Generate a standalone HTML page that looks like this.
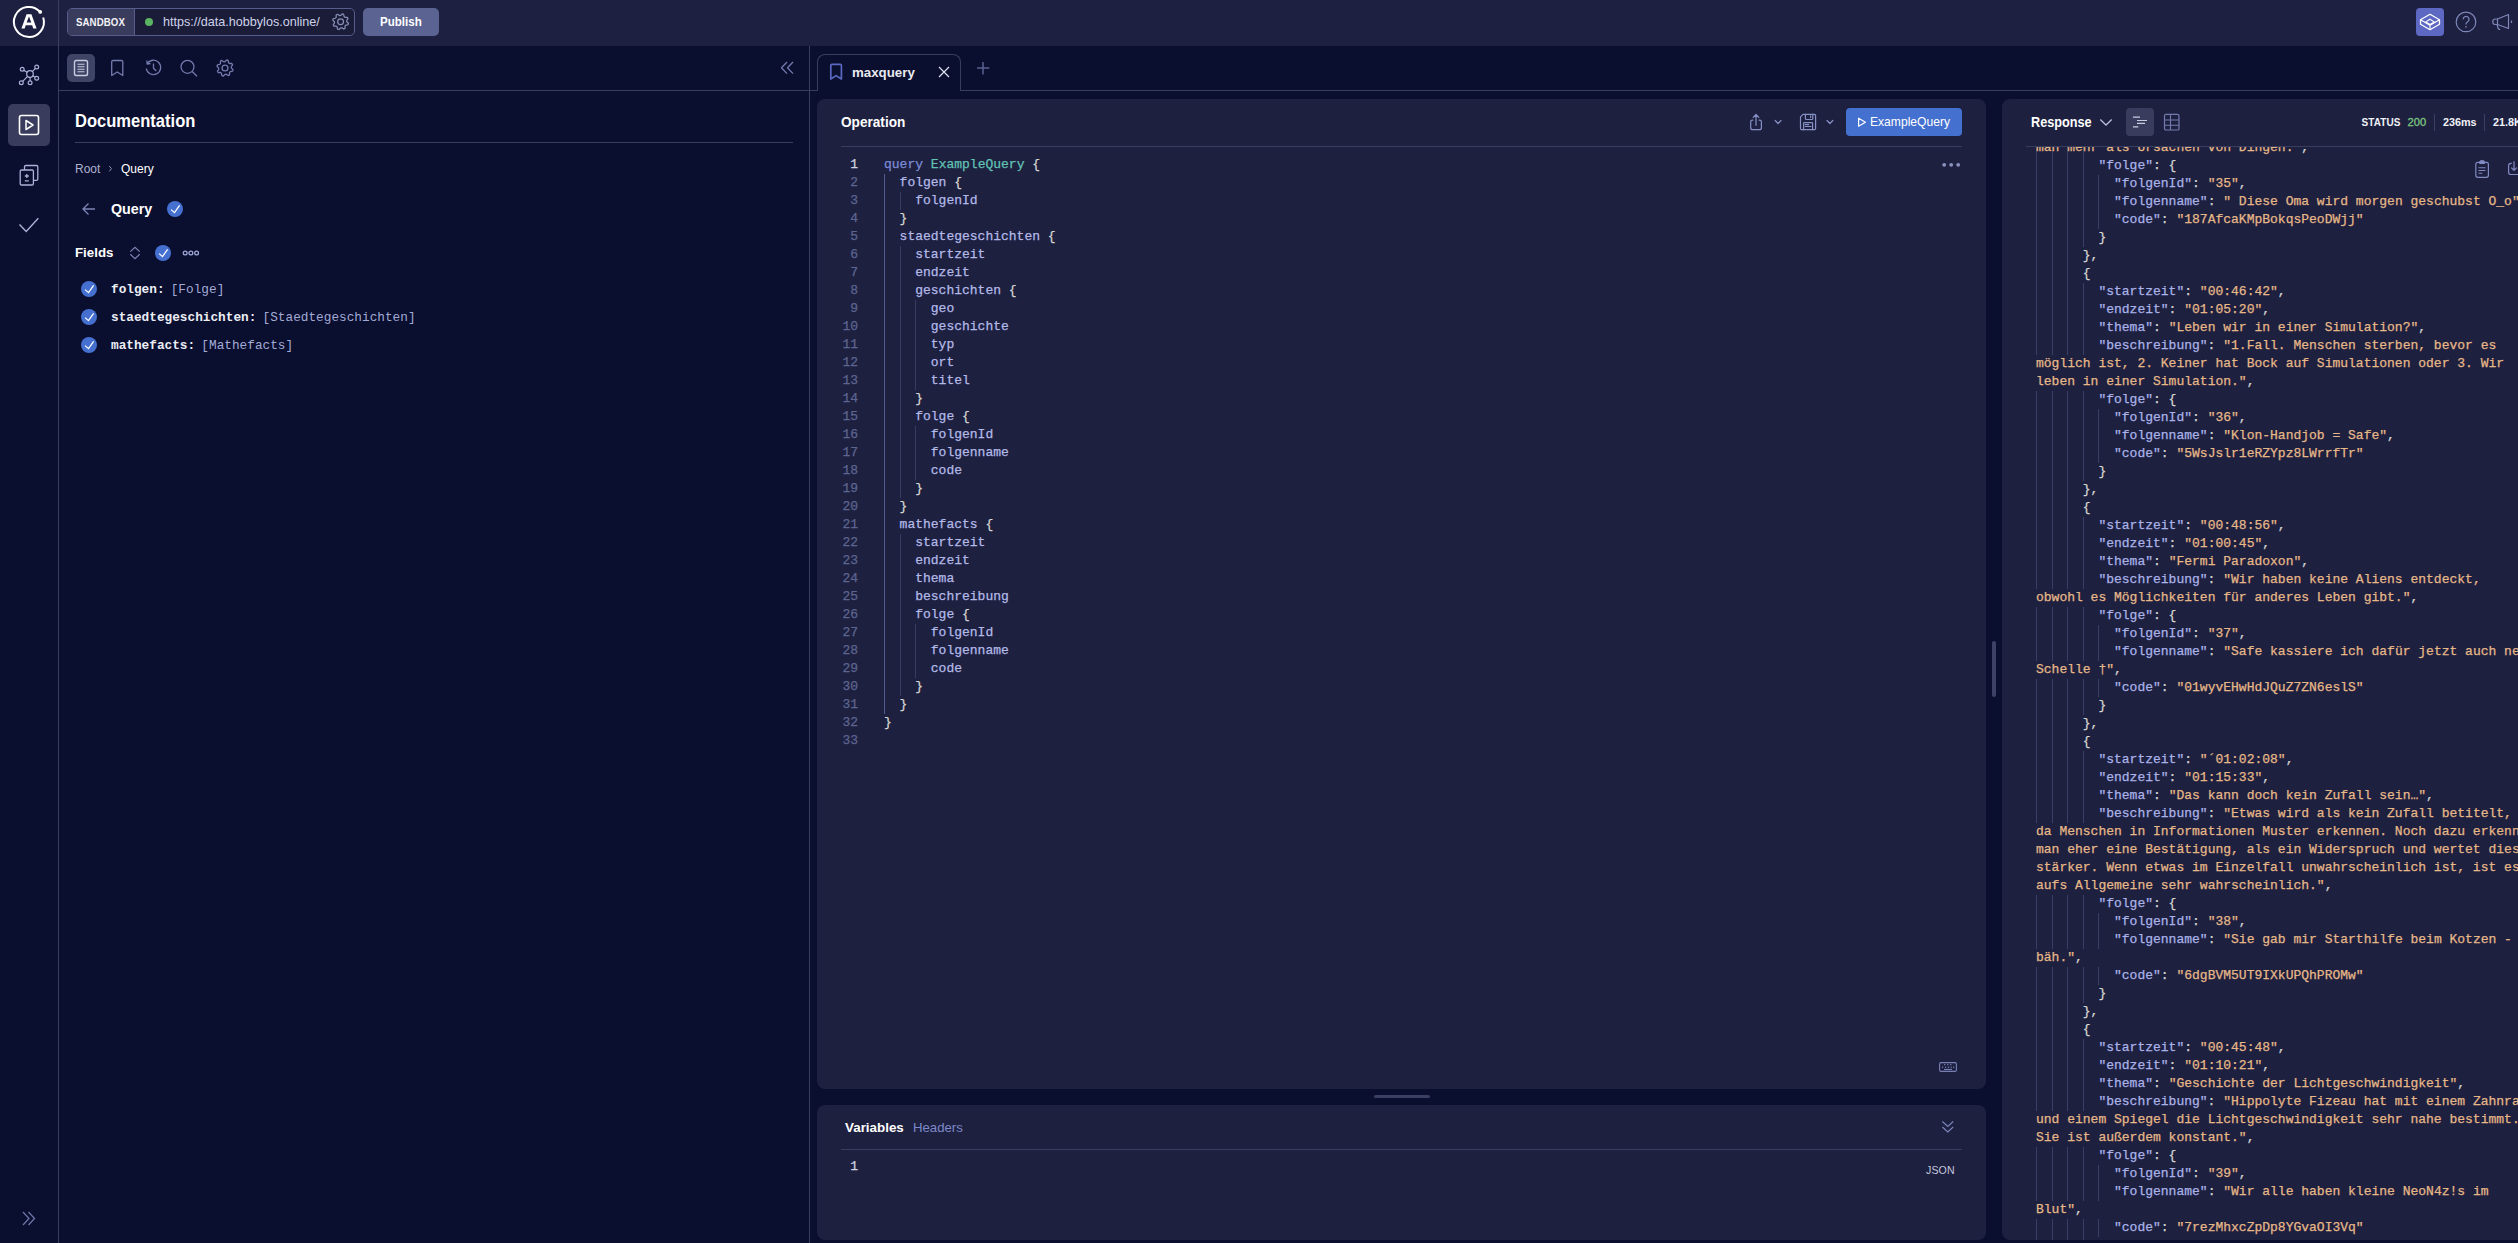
<!DOCTYPE html>
<html><head><meta charset="utf-8">
<style>
*{box-sizing:border-box;margin:0;padding:0}
html,body{width:2518px;height:1243px;overflow:hidden;background:#0a0e2f;font-family:"Liberation Sans",sans-serif;color:#fff}
.a{position:absolute}
.mono{font-family:"Liberation Mono",monospace}
svg{position:absolute;overflow:visible}
.panel{background:#1e2040;border-radius:8px}
.bl{background:#393d5e}
.t{position:absolute;white-space:pre;line-height:1}
.code{position:absolute;font-family:"Liberation Mono",monospace;font-size:13px;line-height:18px;white-space:pre;-webkit-text-stroke:0.25px currentColor}
.ln{position:absolute;width:40px;text-align:right;color:#5d6590}
.g{position:absolute;width:1px;background:#3a3f66}
.kw{color:#7d8bd8}
.nm{color:#62c3b4}
.fd{color:#b3bae8}
.k{color:#aab3e8}
.s{color:#e6b888}
.p{color:#d6d6d2}
</style></head><body>
<div class="a" style="left:0;top:0;width:2518px;height:46px;background:#1d2040"></div>
<div class="a bl" style="left:58px;top:0;width:1px;height:1243px"></div>
<div class="a bl" style="left:809px;top:46px;width:1px;height:1197px"></div>
<div class="a bl" style="left:59px;top:90px;width:759px;height:1px"></div>
<div class="a bl" style="left:960px;top:90px;width:1558px;height:1px"></div>
<svg width="58" height="46" style="left:0;top:0">
<path d="M 43.23 17.46 A 15 15 0 1 1 40.11 11.94" fill="none" stroke="#fff" stroke-width="2"/>
<circle cx="40.2" cy="11.9" r="1.9" fill="#fff"/>
<path d="M 26.6 14.2 L 31.4 14.2 L 36.6 28.4 L 33.2 28.4 L 32.2 25.3 L 25.7 25.3 L 24.7 28.4 L 21.4 28.4 Z M 26.6 22.6 L 31.3 22.6 L 29.0 16.4 Z" fill="#fff" fill-rule="evenodd"/>
</svg>
<div class="a" style="left:67px;top:8px;width:288px;height:28px;border:1px solid #565d8c;border-radius:5px;background:#1a1c38;overflow:hidden"><div class="a" style="left:0;top:0;width:67px;height:26px;background:#393c5c;border-right:1px solid #565d8c"></div></div>
<div class="t" style="left:76px;top:16.55px;font-size:11.4px;color:#f2f2f7;font-weight:bold;letter-spacing:0.1px;transform:scaleX(0.85);transform-origin:0 0">SANDBOX</div>

<div class="a" style="left:145px;top:18px;width:8px;height:8px;border-radius:50%;background:#5bb462"></div>
<div class="t" style="left:163px;top:15.63px;font-size:12.6px;color:#cfd3ea;">https://data.hobbylos.online/</div>

<svg width="2518" height="46" style="left:0;top:0"><path d="M 340.60 15.46 L 342.16 13.85 L 343.66 14.31 L 344.07 16.51 L 345.01 17.29 L 347.25 17.26 L 347.99 18.64 L 346.72 20.48 L 346.84 21.70 L 348.45 23.26 L 347.99 24.76 L 345.79 25.17 L 345.01 26.11 L 345.04 28.35 L 343.66 29.09 L 341.82 27.82 L 340.60 27.94 L 339.04 29.55 L 337.54 29.09 L 337.13 26.89 L 336.19 26.11 L 333.95 26.14 L 333.21 24.76 L 334.48 22.92 L 334.36 21.70 L 332.75 20.14 L 333.21 18.64 L 335.41 18.23 L 336.19 17.29 L 336.16 15.05 L 337.54 14.31 L 339.38 15.58 Z" fill="none" stroke="#8a90b8" stroke-width="1.2" stroke-linejoin="round"/><circle cx="340.6" cy="21.7" r="2.88" fill="none" stroke="#8a90b8" stroke-width="1.2"/></svg>
<div class="a" style="left:363px;top:8px;width:76px;height:28px;border-radius:5px;background:#5a6391"></div>
<div class="t" style="left:380px;top:15.29px;font-size:13.6px;color:#fff;font-weight:bold;transform:scaleX(0.85);transform-origin:0 0">Publish</div>

<div class="a" style="left:2416px;top:8px;width:28px;height:28px;border-radius:4px;background:#5c68c2"></div>
<svg width="2518" height="46" style="left:0;top:0">
<path d="M 2430 14.3 L 2439.5 19.8 L 2439.5 24.2 L 2430 29.7 L 2420.5 24.2 L 2420.5 19.8 Z" fill="none" stroke="#fff" stroke-width="1.3" stroke-linejoin="round"/>
<path d="M 2420.5 19.8 L 2430 25.3 L 2439.5 19.8 M 2430 25.3 L 2430 29.7" fill="none" stroke="#fff" stroke-width="1.1"/>
<path d="M 2430 19.2 L 2434.2 21.9 L 2430 24.5 L 2425.8 21.9 Z" fill="none" stroke="#fff" stroke-width="1.1"/>
<circle cx="2466" cy="21.9" r="9.8" fill="none" stroke="#7d86b8" stroke-width="1.2"/>
<path d="M 2463.2 19.3 A 2.9 2.9 0 1 1 2467.6 21.8 C 2466.3 22.6 2466 23.3 2466 24.6" fill="none" stroke="#7d86b8" stroke-width="1.3"/>
<circle cx="2466" cy="26.9" r="0.8" fill="#7d86b8"/>
<path d="M 2497.5 19 L 2508.5 14.5 L 2508.5 28.5 L 2497.5 24.5 Z" fill="none" stroke="#7d86b8" stroke-width="1.2" stroke-linejoin="round"/>
<path d="M 2497.5 19 L 2495 19 A 2.8 2.8 0 0 0 2495 24.5 L 2497.5 24.5 M 2497 24.5 L 2498.2 28.5 C 2498.5 29.5 2499.5 29.5 2500 29" fill="none" stroke="#7d86b8" stroke-width="1.2"/>
<path d="M 2511.5 20.5 L 2511.5 23" stroke="#7d86b8" stroke-width="1.2"/>
</svg>
<div class="a" style="left:8px;top:104px;width:42px;height:42px;border-radius:5px;background:#393c5c"></div>
<svg width="58" height="1243" style="left:0;top:0">
<g fill="none" stroke="#aab2d8" stroke-width="1.2">
<circle cx="30" cy="74" r="3.3"/>
<circle cx="22.2" cy="69.3" r="1.9"/><circle cx="36.7" cy="67" r="1.9"/><circle cx="36.7" cy="78.2" r="1.9"/>
<circle cx="21.3" cy="82.8" r="1.9"/><circle cx="30.1" cy="82.8" r="1.9"/>
<path d="M 27.43 72.45 L 23.83 70.28 M 32.07 71.83 L 35.39 68.37 M 32.54 75.59 L 35.09 77.19 M 27.89 76.13 L 22.64 81.45 M 30.03 77.00 L 30.08 80.90"/>
</g>
<rect x="19.5" y="115.5" width="19" height="19" rx="2" fill="none" stroke="#fff" stroke-width="1.6"/>
<path d="M 26 120.5 L 33 125 L 26 129.5 Z" fill="none" stroke="#fff" stroke-width="1.5" stroke-linejoin="round"/>
<g fill="none" stroke="#aab2d8" stroke-width="1.3">
<path d="M 24.5 170 L 24.5 166.8 Q 24.5 165.5 25.8 165.5 L 36.5 165.5 Q 37.8 165.5 37.8 166.8 L 37.8 179 Q 37.8 180.3 36.5 180.3 L 33.3 180.3"/>
<rect x="20.2" y="170" width="13.2" height="15" rx="1.3"/>
<path d="M 26.8 174 L 26.8 178 M 24.8 176 L 28.8 176 M 24.8 180.8 L 28.8 180.8"/>
</g>
<path d="M 19.5 224.5 L 26.2 231.5 L 38.3 218.3" fill="none" stroke="#aab2d8" stroke-width="1.4"/>
<path d="M 23 1212 L 29 1218.5 L 23 1225 M 28.5 1212 L 34.5 1218.5 L 28.5 1225" fill="none" stroke="#6b74a6" stroke-width="1.3"/>
</svg>
<div class="a" style="left:67px;top:54px;width:28px;height:28px;border-radius:5px;background:#3e4466"></div>
<svg width="810" height="400" style="left:0;top:0">
<rect x="74.5" y="60.5" width="13" height="15" rx="1.8" fill="none" stroke="#c9ccdf" stroke-width="1.4"/>
<path d="M 77.5 64.2 L 84.5 64.2 M 77.5 66.7 L 84.5 66.7 M 77.5 69.2 L 84.5 69.2 M 77.5 71.7 L 84.5 71.7" stroke="#c9ccdf" stroke-width="1.1"/>
<g fill="none" stroke="#737bad" stroke-width="1.3" stroke-linejoin="round">
<path d="M 111.7 75.5 L 111.7 61.8 Q 111.7 60.5 113 60.5 L 121.5 60.5 Q 122.8 60.5 122.8 61.8 L 122.8 75.5 L 117.25 72 Z"/>
<path d="M 147.2 63.8 A 7.2 7.2 0 1 1 146.3 68.5"/>
<path d="M 146.8 60.5 L 147.2 64 L 150.5 63.5"/>
<path d="M 153.5 63.5 L 153.5 68.2 L 156.3 71"/>
<circle cx="187.5" cy="66.8" r="6.5"/>
<path d="M 192.2 71.5 L 197 76.3"/>
<path d="M 225.00 61.60 L 226.60 59.96 L 228.14 60.42 L 228.55 62.68 L 229.52 63.48 L 231.82 63.44 L 232.58 64.86 L 231.27 66.75 L 231.40 68.00 L 233.04 69.60 L 232.58 71.14 L 230.32 71.55 L 229.52 72.52 L 229.56 74.82 L 228.14 75.58 L 226.25 74.27 L 225.00 74.40 L 223.40 76.04 L 221.86 75.58 L 221.45 73.32 L 220.48 72.52 L 218.18 72.56 L 217.42 71.14 L 218.73 69.25 L 218.60 68.00 L 216.96 66.40 L 217.42 64.86 L 219.68 64.45 L 220.48 63.48 L 220.44 61.18 L 221.86 60.42 L 223.75 61.73 Z" fill="none" stroke="#737bad" stroke-width="1.3" stroke-linejoin="round"/><circle cx="225" cy="68" r="2.95" fill="none" stroke="#737bad" stroke-width="1.3"/>
<path d="M 787 62 L 781.5 67.8 L 787 73.6 M 793 62 L 787.5 67.8 L 793 73.6"/>
</g>
<path d="M 95 209 L 83 209 M 88.5 203.5 L 83 209 L 88.5 214.5" fill="none" stroke="#7c84b4" stroke-width="1.3"/>
<circle cx="175" cy="209" r="8" fill="#4570d0"/><path d="M 171.1 209.6 L 174.5 212.6 L 179.6 205.4" fill="none" stroke="#fff" stroke-width="1.25"/>
<path d="M 130.3 251.6 L 135 247.3 L 139.7 251.6 M 130.3 254.3 L 135 258.7 L 139.7 254.3" fill="none" stroke="#7c84b4" stroke-width="1.2"/>
<circle cx="163" cy="253" r="8" fill="#4570d0"/><path d="M 159.1 253.6 L 162.5 256.6 L 167.6 249.4" fill="none" stroke="#fff" stroke-width="1.25"/>
<g fill="none" stroke="#9ea7d6" stroke-width="1.3"><circle cx="185.2" cy="253" r="1.9"/><circle cx="190.9" cy="253" r="1.9"/><circle cx="196.6" cy="253" r="1.9"/></g>
<circle cx="89" cy="289" r="8" fill="#4570d0"/><path d="M 85.1 289.6 L 88.5 292.6 L 93.6 285.4" fill="none" stroke="#fff" stroke-width="1.25"/>
<circle cx="89" cy="317" r="8" fill="#4570d0"/><path d="M 85.1 317.6 L 88.5 320.6 L 93.6 313.4" fill="none" stroke="#fff" stroke-width="1.25"/>
<circle cx="89" cy="345" r="8" fill="#4570d0"/><path d="M 85.1 345.6 L 88.5 348.6 L 93.6 341.4" fill="none" stroke="#fff" stroke-width="1.25"/>
</svg>
<div class="t" style="left:75px;top:112.83px;font-size:17.8px;color:#fff;font-weight:bold;transform:scaleX(0.93);transform-origin:0 0">Documentation</div>

<div class="a bl" style="left:75px;top:142px;width:718px;height:1px"></div>
<div class="t" style="left:75px;top:163.04px;font-size:12px;color:#aeb3cf;">Root</div>

<svg width="200" height="200" style="left:0;top:0"><path d="M 109.3 166 L 111.5 168.7 L 109.3 171.4" fill="none" stroke="#8a90b8" stroke-width="1"/></svg>
<div class="t" style="left:121px;top:163.04px;font-size:12px;color:#fff;">Query</div>

<div class="t" style="left:111px;top:201.70px;font-size:14.3px;color:#fff;font-weight:bold;">Query</div>

<div class="t" style="left:75px;top:245.94px;font-size:13.3px;color:#fff;font-weight:bold;">Fields</div>

<div class="code" style="left:111px;top:281px;font-size:12.75px;line-height:18px;-webkit-text-stroke:0"><span style="color:#eceef6;font-weight:bold">folgen:</span><span style="letter-spacing:-1.5px"> </span><span style="color:#a2abd6">[Folge]</span></div>

<div class="code" style="left:111px;top:309px;font-size:12.75px;line-height:18px;-webkit-text-stroke:0"><span style="color:#eceef6;font-weight:bold">staedtegeschichten:</span><span style="letter-spacing:-1.5px"> </span><span style="color:#a2abd6">[Staedtegeschichten]</span></div>

<div class="code" style="left:111px;top:337px;font-size:12.75px;line-height:18px;-webkit-text-stroke:0"><span style="color:#eceef6;font-weight:bold">mathefacts:</span><span style="letter-spacing:-1.5px"> </span><span style="color:#a2abd6">[Mathefacts]</span></div>

<div class="a" style="left:817px;top:54px;width:144px;height:37px;border:1px solid #393d5e;border-bottom:none;border-radius:8px 8px 0 0;background:#0a0e2f"></div>
<div class="t" style="left:852px;top:66.24px;font-size:13.3px;color:#e9eaf0;font-weight:bold;">maxquery</div>

<svg width="2518" height="100" style="left:0;top:0">
<path d="M 830.8 79 L 830.8 65.3 Q 830.8 64.3 831.8 64.3 L 840.4 64.3 Q 841.4 64.3 841.4 65.3 L 841.4 79 L 836.1 75.6 Z" fill="none" stroke="#5a69bf" stroke-width="1.7" stroke-linejoin="round"/>
<path d="M 939 67 L 949 77 M 949 67 L 939 77" stroke="#dfe2f2" stroke-width="1.2"/>
<path d="M 983 62 L 983 74.5 M 977 68 L 989.3 68" stroke="#59618f" stroke-width="1.5"/>
</svg>
<div class="a panel" style="left:817px;top:99px;width:1169px;height:990px"></div>
<div class="a panel" style="left:817px;top:1105px;width:1169px;height:135px"></div>
<div class="a panel" style="left:2002px;top:99px;width:600px;height:1141px"></div>
<div class="a" style="left:1992px;top:641px;width:4px;height:56px;border-radius:2px;background:#3d4166"></div>
<div class="a" style="left:1374px;top:1095px;width:56px;height:3px;border-radius:2px;background:#3b3f63"></div>
<div class="t" style="left:841px;top:114.67px;font-size:14.8px;color:#fff;font-weight:bold;transform:scaleX(0.92);transform-origin:0 0">Operation</div>

<div class="a bl" style="left:841px;top:146px;width:1121px;height:1px"></div>
<div class="a" style="left:1846px;top:108px;width:116px;height:28px;border-radius:4px;background:#4470cf"></div>
<div class="t" style="left:1870px;top:116.26px;font-size:12.1px;color:#fff;">ExampleQuery</div>

<svg width="2518" height="1243" style="left:0;top:0">
<g fill="none" stroke="#8590c4" stroke-width="1.2" stroke-linejoin="round" stroke-linecap="round">
<path d="M 1752.8 120.2 L 1752.3 120.2 Q 1750.7 120.2 1750.7 121.8 L 1750.7 127.7 Q 1750.7 129.7 1752.7 129.7 L 1759.4 129.7 Q 1761.4 129.7 1761.4 127.7 L 1761.4 121.8 Q 1761.4 120.2 1759.8 120.2 L 1759.2 120.2"/>
<path d="M 1756 125.3 L 1756 114.5 M 1753.2 117.4 L 1756 114.5 L 1758.8 117.4"/>
<path d="M 1775.2 120.5 L 1778.1 123.5 L 1781 120.5"/>
<path d="M 1803 114.3 L 1814.5 114.3 Q 1815.6 114.3 1815.6 115.4 L 1815.6 128.6 Q 1815.6 129.7 1814.5 129.7 L 1801.5 129.7 Q 1800.5 129.7 1800.5 128.6 L 1800.5 116.8 Z"/>
<path d="M 1805.4 114.3 L 1805.4 118.6 Q 1805.4 119.5 1806.3 119.5 L 1811.9 119.5 Q 1812.8 119.5 1812.8 118.6 L 1812.8 114.3"/>
<path d="M 1810.6 115.8 L 1810.6 117.4"/>
<path d="M 1803.6 129.7 L 1803.6 123.4 Q 1803.6 122.6 1804.4 122.6 L 1811.8 122.6 Q 1812.6 122.6 1812.6 123.4 L 1812.6 129.7"/>
<path d="M 1805.3 124.6 L 1808.6 124.6 M 1805.3 126.5 L 1811 126.5"/>
<path d="M 1827 120.5 L 1829.9 123.5 L 1832.8 120.5"/>
</g>
<path d="M 1858.6 118.2 L 1865.4 122.2 L 1858.6 126.2 Z" fill="none" stroke="#fff" stroke-width="1.2" stroke-linejoin="round"/>
<circle cx="1944.2" cy="164.8" r="1.9" fill="#8a92bf"/><circle cx="1951.2" cy="164.8" r="1.9" fill="#8a92bf"/><circle cx="1958.2" cy="164.8" r="1.9" fill="#8a92bf"/>
<rect x="1939.6" y="1062.6" width="16.8" height="8.8" rx="1.4" fill="none" stroke="#7880b4" stroke-width="1.1"/>
<g fill="#7880b4"><rect x="1944.1" y="1064" width="1.2" height="1.2"/><rect x="1947.2" y="1064" width="1.2" height="1.2"/><rect x="1950.2" y="1064" width="1.2" height="1.2"/><rect x="1942" y="1066.6" width="1.2" height="1.2"/><rect x="1945" y="1066.6" width="1.2" height="1.2"/><rect x="1947.9" y="1066.6" width="1.2" height="1.2"/><rect x="1950.6" y="1066.6" width="1.2" height="1.2"/><rect x="1953" y="1066.6" width="1.2" height="1.2"/><rect x="1944" y="1068.9" width="8" height="1.1"/></g>
<path d="M 1942.4 1121.5 L 1947.8 1126.4 L 1953.2 1121.5 M 1942.4 1127 L 1947.8 1132 L 1953.2 1127" fill="none" stroke="#7d87bf" stroke-width="1.1"/>
</svg>
<div class="t" style="left:845px;top:1120.66px;font-size:13.4px;color:#fff;font-weight:bold;">Variables</div>

<div class="t" style="left:913px;top:1120.83px;font-size:13.2px;color:#7d89c8;">Headers</div>

<div class="a bl" style="left:841px;top:1149px;width:1121px;height:1px"></div>
<div class="code" style="left:846px;top:1158px;color:#d0d3e0;width:12px;text-align:right">1</div>
<div class="t" style="left:1926px;top:1165.23px;font-size:10.6px;color:#c3c7dc;letter-spacing:0.1px">JSON</div>

<div class="g" style="left:884.0px;top:173.5px;height:540px;background:#4f5a8e"></div>
<div class="g" style="left:899.6px;top:191.5px;height:18px;background:#363b60"></div>
<div class="g" style="left:899.6px;top:245.5px;height:252px;background:#363b60"></div>
<div class="g" style="left:899.6px;top:533.5px;height:162px;background:#363b60"></div>
<div class="g" style="left:915.2px;top:299.5px;height:90px;background:#363b60"></div>
<div class="g" style="left:915.2px;top:425.5px;height:54px;background:#363b60"></div>
<div class="g" style="left:915.2px;top:623.5px;height:54px;background:#363b60"></div>
<div class="code" style="left:0;top:155.5px;width:1980px;height:600px"><div class="ln" style="left:818px;top:0px;color:#d0d3e0">1</div><div class="ln" style="left:818px;top:18px;color:#5d6590">2</div><div class="ln" style="left:818px;top:36px;color:#5d6590">3</div><div class="ln" style="left:818px;top:54px;color:#5d6590">4</div><div class="ln" style="left:818px;top:72px;color:#5d6590">5</div><div class="ln" style="left:818px;top:90px;color:#5d6590">6</div><div class="ln" style="left:818px;top:108px;color:#5d6590">7</div><div class="ln" style="left:818px;top:126px;color:#5d6590">8</div><div class="ln" style="left:818px;top:144px;color:#5d6590">9</div><div class="ln" style="left:818px;top:162px;color:#5d6590">10</div><div class="ln" style="left:818px;top:180px;color:#5d6590">11</div><div class="ln" style="left:818px;top:198px;color:#5d6590">12</div><div class="ln" style="left:818px;top:216px;color:#5d6590">13</div><div class="ln" style="left:818px;top:234px;color:#5d6590">14</div><div class="ln" style="left:818px;top:252px;color:#5d6590">15</div><div class="ln" style="left:818px;top:270px;color:#5d6590">16</div><div class="ln" style="left:818px;top:288px;color:#5d6590">17</div><div class="ln" style="left:818px;top:306px;color:#5d6590">18</div><div class="ln" style="left:818px;top:324px;color:#5d6590">19</div><div class="ln" style="left:818px;top:342px;color:#5d6590">20</div><div class="ln" style="left:818px;top:360px;color:#5d6590">21</div><div class="ln" style="left:818px;top:378px;color:#5d6590">22</div><div class="ln" style="left:818px;top:396px;color:#5d6590">23</div><div class="ln" style="left:818px;top:414px;color:#5d6590">24</div><div class="ln" style="left:818px;top:432px;color:#5d6590">25</div><div class="ln" style="left:818px;top:450px;color:#5d6590">26</div><div class="ln" style="left:818px;top:468px;color:#5d6590">27</div><div class="ln" style="left:818px;top:486px;color:#5d6590">28</div><div class="ln" style="left:818px;top:504px;color:#5d6590">29</div><div class="ln" style="left:818px;top:522px;color:#5d6590">30</div><div class="ln" style="left:818px;top:540px;color:#5d6590">31</div><div class="ln" style="left:818px;top:558px;color:#5d6590">32</div><div class="ln" style="left:818px;top:576px;color:#5d6590">33</div></div>
<div class="code" style="left:884px;top:155.5px;width:1000px;height:600px"><div class="fd" style="position:absolute;left:0.0px;top:0px"><span class="kw">query</span> <span class="nm">ExampleQuery</span> <span class="p">{</span></div><div class="fd" style="position:absolute;left:15.6px;top:18px">folgen <span class="p">{</span></div><div class="fd" style="position:absolute;left:31.2px;top:36px">folgenId</div><div class="fd" style="position:absolute;left:15.6px;top:54px"><span class="p">}</span></div><div class="fd" style="position:absolute;left:15.6px;top:72px">staedtegeschichten <span class="p">{</span></div><div class="fd" style="position:absolute;left:31.2px;top:90px">startzeit</div><div class="fd" style="position:absolute;left:31.2px;top:108px">endzeit</div><div class="fd" style="position:absolute;left:31.2px;top:126px">geschichten <span class="p">{</span></div><div class="fd" style="position:absolute;left:46.8px;top:144px">geo</div><div class="fd" style="position:absolute;left:46.8px;top:162px">geschichte</div><div class="fd" style="position:absolute;left:46.8px;top:180px">typ</div><div class="fd" style="position:absolute;left:46.8px;top:198px">ort</div><div class="fd" style="position:absolute;left:46.8px;top:216px">titel</div><div class="fd" style="position:absolute;left:31.2px;top:234px"><span class="p">}</span></div><div class="fd" style="position:absolute;left:31.2px;top:252px">folge <span class="p">{</span></div><div class="fd" style="position:absolute;left:46.8px;top:270px">folgenId</div><div class="fd" style="position:absolute;left:46.8px;top:288px">folgenname</div><div class="fd" style="position:absolute;left:46.8px;top:306px">code</div><div class="fd" style="position:absolute;left:31.2px;top:324px"><span class="p">}</span></div><div class="fd" style="position:absolute;left:15.6px;top:342px"><span class="p">}</span></div><div class="fd" style="position:absolute;left:15.6px;top:360px">mathefacts <span class="p">{</span></div><div class="fd" style="position:absolute;left:31.2px;top:378px">startzeit</div><div class="fd" style="position:absolute;left:31.2px;top:396px">endzeit</div><div class="fd" style="position:absolute;left:31.2px;top:414px">thema</div><div class="fd" style="position:absolute;left:31.2px;top:432px">beschreibung</div><div class="fd" style="position:absolute;left:31.2px;top:450px">folge <span class="p">{</span></div><div class="fd" style="position:absolute;left:46.8px;top:468px">folgenId</div><div class="fd" style="position:absolute;left:46.8px;top:486px">folgenname</div><div class="fd" style="position:absolute;left:46.8px;top:504px">code</div><div class="fd" style="position:absolute;left:31.2px;top:522px"><span class="p">}</span></div><div class="fd" style="position:absolute;left:15.6px;top:540px"><span class="p">}</span></div><div class="fd" style="position:absolute;left:0.0px;top:558px"><span class="p">}</span></div><div class="fd" style="position:absolute;left:0.0px;top:576px"></div></div>
<div class="t" style="left:2030.5px;top:115.62px;font-size:13.8px;color:#fff;font-weight:bold;transform:scaleX(0.92);transform-origin:0 0">Response</div>

<div class="a" style="left:2126px;top:108px;width:28px;height:28px;border-radius:4px;background:#393c5c"></div>
<svg width="2518" height="1243" style="left:0;top:0">
<path d="M 2100.3 119.5 L 2106 125 L 2111.7 119.5" fill="none" stroke="#b9bed8" stroke-width="1.3"/>
<g stroke="#c9ccdf" stroke-width="1.2"><path d="M 2133 117.2 L 2140 117.2 M 2137 120.5 L 2147 120.5 M 2137 123.4 L 2145 123.4 M 2133 126.9 L 2138.3 126.9"/></g>
<rect x="2164.5" y="114.3" width="14.5" height="15.7" rx="1.6" fill="none" stroke="#737bad" stroke-width="1.2"/>
<path d="M 2164.5 120 L 2179 120 M 2164.5 125.2 L 2179 125.2 M 2170.5 114.3 L 2170.5 130" stroke="#737bad" stroke-width="1.1"/>
<rect x="2475.8" y="162.3" width="12.6" height="15" rx="2" fill="none" stroke="#8089c0" stroke-width="1.2"/>
<path d="M 2479.5 163.5 L 2479.5 162.5 Q 2479.5 160.5 2481.8 160.5 L 2482.5 160.5 Q 2484.6 160.5 2484.6 162.5 L 2484.6 163.5 Z" fill="#8089c0" stroke="#8089c0" stroke-width="1"/>
<path d="M 2478.5 167.7 L 2485.5 167.7 M 2478.5 170.5 L 2485.5 170.5 M 2478.5 173.3 L 2482.3 173.3" stroke="#8089c0" stroke-width="1.1"/>
<path d="M 2511.8 163.3 L 2510.8 163.3 Q 2508.6 163.3 2508.6 165.5 L 2508.6 172.3 Q 2508.6 174.5 2510.8 174.5 L 2520 174.5 M 2514 161.3 L 2514 170.3 M 2511.2 167.6 L 2514 170.3 L 2516.8 167.6" fill="none" stroke="#8089c0" stroke-width="1.2"/>
<path d="M 2434.5 114 L 2434.5 131 M 2484.5 114 L 2484.5 131" stroke="#3b3f63" stroke-width="1"/>
</svg>
<div class="t" style="left:2361.5px;top:117.94px;font-size:10px;color:#f0f1f6;font-weight:bold;letter-spacing:0.1px">STATUS</div>

<div class="t" style="left:2407.5px;top:116.92px;font-size:11.2px;color:#7cc57f;-webkit-text-stroke:0.3px #7cc57f">200</div>

<div class="t" style="left:2443px;top:117.26px;font-size:10.8px;color:#f0f1f6;font-weight:bold;">236ms</div>

<div class="t" style="left:2493px;top:117.26px;font-size:10.8px;color:#f0f1f6;font-weight:bold;">21.8KB</div>

<div class="a bl" style="left:2026px;top:146px;width:500px;height:1px"></div>
<div class="code" style="left:2036px;top:147px;width:600px;height:1093px;overflow:hidden"><div class="g" style="left:0.0px;top:0px;height:10.24px"></div><div class="g" style="left:15.6px;top:0px;height:10.24px"></div><div class="g" style="left:31.2px;top:0px;height:10.24px"></div><div class="g" style="left:46.8px;top:0px;height:10.24px"></div><div style="position:absolute;left:0;top:-7.76px"><span class="s">man mehr als Ursachen von Dingen."</span><span class="p">,</span></div><div class="g" style="left:0.0px;top:10.24px;height:18px"></div><div class="g" style="left:15.6px;top:10.24px;height:18px"></div><div class="g" style="left:31.2px;top:10.24px;height:18px"></div><div class="g" style="left:46.8px;top:10.24px;height:18px"></div><div style="position:absolute;left:62.4px;top:10.24px"><span class="k">"folge"</span><span class="p">:</span><span class="p"> {</span></div><div class="g" style="left:0.0px;top:28.24px;height:18px"></div><div class="g" style="left:15.6px;top:28.24px;height:18px"></div><div class="g" style="left:31.2px;top:28.24px;height:18px"></div><div class="g" style="left:46.8px;top:28.24px;height:18px"></div><div class="g" style="left:62.4px;top:28.24px;height:18px"></div><div style="position:absolute;left:78.0px;top:28.24px"><span class="k">"folgenId"</span><span class="p">:</span><span class="p"> </span><span class="s">"35"</span><span class="p">,</span></div><div class="g" style="left:0.0px;top:46.24px;height:18px"></div><div class="g" style="left:15.6px;top:46.24px;height:18px"></div><div class="g" style="left:31.2px;top:46.24px;height:18px"></div><div class="g" style="left:46.8px;top:46.24px;height:18px"></div><div class="g" style="left:62.4px;top:46.24px;height:18px"></div><div style="position:absolute;left:78.0px;top:46.24px"><span class="k">"folgenname"</span><span class="p">:</span><span class="p"> </span><span class="s">" Diese Oma wird morgen geschubst O_o"</span><span class="p">,</span></div><div class="g" style="left:0.0px;top:64.24px;height:18px"></div><div class="g" style="left:15.6px;top:64.24px;height:18px"></div><div class="g" style="left:31.2px;top:64.24px;height:18px"></div><div class="g" style="left:46.8px;top:64.24px;height:18px"></div><div class="g" style="left:62.4px;top:64.24px;height:18px"></div><div style="position:absolute;left:78.0px;top:64.24px"><span class="k">"code"</span><span class="p">:</span><span class="p"> </span><span class="s">"187AfcaKMpBokqsPeoDWjj"</span></div><div class="g" style="left:0.0px;top:82.24px;height:18px"></div><div class="g" style="left:15.6px;top:82.24px;height:18px"></div><div class="g" style="left:31.2px;top:82.24px;height:18px"></div><div class="g" style="left:46.8px;top:82.24px;height:18px"></div><div style="position:absolute;left:62.4px;top:82.24px"><span class="p">}</span></div><div class="g" style="left:0.0px;top:100.24px;height:18px"></div><div class="g" style="left:15.6px;top:100.24px;height:18px"></div><div class="g" style="left:31.2px;top:100.24px;height:18px"></div><div style="position:absolute;left:46.8px;top:100.24px"><span class="p">},</span></div><div class="g" style="left:0.0px;top:118.24px;height:18px"></div><div class="g" style="left:15.6px;top:118.24px;height:18px"></div><div class="g" style="left:31.2px;top:118.24px;height:18px"></div><div style="position:absolute;left:46.8px;top:118.24px"><span class="p">{</span></div><div class="g" style="left:0.0px;top:136.24px;height:18px"></div><div class="g" style="left:15.6px;top:136.24px;height:18px"></div><div class="g" style="left:31.2px;top:136.24px;height:18px"></div><div class="g" style="left:46.8px;top:136.24px;height:18px"></div><div style="position:absolute;left:62.4px;top:136.24px"><span class="k">"startzeit"</span><span class="p">:</span><span class="p"> </span><span class="s">"00:46:42"</span><span class="p">,</span></div><div class="g" style="left:0.0px;top:154.24px;height:18px"></div><div class="g" style="left:15.6px;top:154.24px;height:18px"></div><div class="g" style="left:31.2px;top:154.24px;height:18px"></div><div class="g" style="left:46.8px;top:154.24px;height:18px"></div><div style="position:absolute;left:62.4px;top:154.24px"><span class="k">"endzeit"</span><span class="p">:</span><span class="p"> </span><span class="s">"01:05:20"</span><span class="p">,</span></div><div class="g" style="left:0.0px;top:172.24px;height:18px"></div><div class="g" style="left:15.6px;top:172.24px;height:18px"></div><div class="g" style="left:31.2px;top:172.24px;height:18px"></div><div class="g" style="left:46.8px;top:172.24px;height:18px"></div><div style="position:absolute;left:62.4px;top:172.24px"><span class="k">"thema"</span><span class="p">:</span><span class="p"> </span><span class="s">"Leben wir in einer Simulation?"</span><span class="p">,</span></div><div class="g" style="left:0.0px;top:190.24px;height:18px"></div><div class="g" style="left:15.6px;top:190.24px;height:18px"></div><div class="g" style="left:31.2px;top:190.24px;height:18px"></div><div class="g" style="left:46.8px;top:190.24px;height:18px"></div><div style="position:absolute;left:62.4px;top:190.24px"><span class="k">"beschreibung"</span><span class="p">:</span><span class="p"> </span><span class="s">"1.Fall. Menschen sterben, bevor es</span></div><div style="position:absolute;left:0;top:208.24px"><span class="s">möglich ist, 2. Keiner hat Bock auf Simulationen oder 3. Wir</span></div><div style="position:absolute;left:0;top:226.24px"><span class="s">leben in einer Simulation."</span><span class="p">,</span></div><div class="g" style="left:0.0px;top:244.24px;height:18px"></div><div class="g" style="left:15.6px;top:244.24px;height:18px"></div><div class="g" style="left:31.2px;top:244.24px;height:18px"></div><div class="g" style="left:46.8px;top:244.24px;height:18px"></div><div style="position:absolute;left:62.4px;top:244.24px"><span class="k">"folge"</span><span class="p">:</span><span class="p"> {</span></div><div class="g" style="left:0.0px;top:262.24px;height:18px"></div><div class="g" style="left:15.6px;top:262.24px;height:18px"></div><div class="g" style="left:31.2px;top:262.24px;height:18px"></div><div class="g" style="left:46.8px;top:262.24px;height:18px"></div><div class="g" style="left:62.4px;top:262.24px;height:18px"></div><div style="position:absolute;left:78.0px;top:262.24px"><span class="k">"folgenId"</span><span class="p">:</span><span class="p"> </span><span class="s">"36"</span><span class="p">,</span></div><div class="g" style="left:0.0px;top:280.24px;height:18px"></div><div class="g" style="left:15.6px;top:280.24px;height:18px"></div><div class="g" style="left:31.2px;top:280.24px;height:18px"></div><div class="g" style="left:46.8px;top:280.24px;height:18px"></div><div class="g" style="left:62.4px;top:280.24px;height:18px"></div><div style="position:absolute;left:78.0px;top:280.24px"><span class="k">"folgenname"</span><span class="p">:</span><span class="p"> </span><span class="s">"Klon-Handjob = Safe"</span><span class="p">,</span></div><div class="g" style="left:0.0px;top:298.24px;height:18px"></div><div class="g" style="left:15.6px;top:298.24px;height:18px"></div><div class="g" style="left:31.2px;top:298.24px;height:18px"></div><div class="g" style="left:46.8px;top:298.24px;height:18px"></div><div class="g" style="left:62.4px;top:298.24px;height:18px"></div><div style="position:absolute;left:78.0px;top:298.24px"><span class="k">"code"</span><span class="p">:</span><span class="p"> </span><span class="s">"5WsJslr1eRZYpz8LWrrfTr"</span></div><div class="g" style="left:0.0px;top:316.24px;height:18px"></div><div class="g" style="left:15.6px;top:316.24px;height:18px"></div><div class="g" style="left:31.2px;top:316.24px;height:18px"></div><div class="g" style="left:46.8px;top:316.24px;height:18px"></div><div style="position:absolute;left:62.4px;top:316.24px"><span class="p">}</span></div><div class="g" style="left:0.0px;top:334.24px;height:18px"></div><div class="g" style="left:15.6px;top:334.24px;height:18px"></div><div class="g" style="left:31.2px;top:334.24px;height:18px"></div><div style="position:absolute;left:46.8px;top:334.24px"><span class="p">},</span></div><div class="g" style="left:0.0px;top:352.24px;height:18px"></div><div class="g" style="left:15.6px;top:352.24px;height:18px"></div><div class="g" style="left:31.2px;top:352.24px;height:18px"></div><div style="position:absolute;left:46.8px;top:352.24px"><span class="p">{</span></div><div class="g" style="left:0.0px;top:370.24px;height:18px"></div><div class="g" style="left:15.6px;top:370.24px;height:18px"></div><div class="g" style="left:31.2px;top:370.24px;height:18px"></div><div class="g" style="left:46.8px;top:370.24px;height:18px"></div><div style="position:absolute;left:62.4px;top:370.24px"><span class="k">"startzeit"</span><span class="p">:</span><span class="p"> </span><span class="s">"00:48:56"</span><span class="p">,</span></div><div class="g" style="left:0.0px;top:388.24px;height:18px"></div><div class="g" style="left:15.6px;top:388.24px;height:18px"></div><div class="g" style="left:31.2px;top:388.24px;height:18px"></div><div class="g" style="left:46.8px;top:388.24px;height:18px"></div><div style="position:absolute;left:62.4px;top:388.24px"><span class="k">"endzeit"</span><span class="p">:</span><span class="p"> </span><span class="s">"01:00:45"</span><span class="p">,</span></div><div class="g" style="left:0.0px;top:406.24px;height:18px"></div><div class="g" style="left:15.6px;top:406.24px;height:18px"></div><div class="g" style="left:31.2px;top:406.24px;height:18px"></div><div class="g" style="left:46.8px;top:406.24px;height:18px"></div><div style="position:absolute;left:62.4px;top:406.24px"><span class="k">"thema"</span><span class="p">:</span><span class="p"> </span><span class="s">"Fermi Paradoxon"</span><span class="p">,</span></div><div class="g" style="left:0.0px;top:424.24px;height:18px"></div><div class="g" style="left:15.6px;top:424.24px;height:18px"></div><div class="g" style="left:31.2px;top:424.24px;height:18px"></div><div class="g" style="left:46.8px;top:424.24px;height:18px"></div><div style="position:absolute;left:62.4px;top:424.24px"><span class="k">"beschreibung"</span><span class="p">:</span><span class="p"> </span><span class="s">"Wir haben keine Aliens entdeckt,</span></div><div style="position:absolute;left:0;top:442.24px"><span class="s">obwohl es Möglichkeiten für anderes Leben gibt."</span><span class="p">,</span></div><div class="g" style="left:0.0px;top:460.24px;height:18px"></div><div class="g" style="left:15.6px;top:460.24px;height:18px"></div><div class="g" style="left:31.2px;top:460.24px;height:18px"></div><div class="g" style="left:46.8px;top:460.24px;height:18px"></div><div style="position:absolute;left:62.4px;top:460.24px"><span class="k">"folge"</span><span class="p">:</span><span class="p"> {</span></div><div class="g" style="left:0.0px;top:478.24px;height:18px"></div><div class="g" style="left:15.6px;top:478.24px;height:18px"></div><div class="g" style="left:31.2px;top:478.24px;height:18px"></div><div class="g" style="left:46.8px;top:478.24px;height:18px"></div><div class="g" style="left:62.4px;top:478.24px;height:18px"></div><div style="position:absolute;left:78.0px;top:478.24px"><span class="k">"folgenId"</span><span class="p">:</span><span class="p"> </span><span class="s">"37"</span><span class="p">,</span></div><div class="g" style="left:0.0px;top:496.24px;height:18px"></div><div class="g" style="left:15.6px;top:496.24px;height:18px"></div><div class="g" style="left:31.2px;top:496.24px;height:18px"></div><div class="g" style="left:46.8px;top:496.24px;height:18px"></div><div class="g" style="left:62.4px;top:496.24px;height:18px"></div><div style="position:absolute;left:78.0px;top:496.24px"><span class="k">"folgenname"</span><span class="p">:</span><span class="p"> </span><span class="s">"Safe kassiere ich dafür jetzt auch ne</span></div><div style="position:absolute;left:0;top:514.24px"><span class="s">Schelle †"</span><span class="p">,</span></div><div class="g" style="left:0.0px;top:532.24px;height:18px"></div><div class="g" style="left:15.6px;top:532.24px;height:18px"></div><div class="g" style="left:31.2px;top:532.24px;height:18px"></div><div class="g" style="left:46.8px;top:532.24px;height:18px"></div><div class="g" style="left:62.4px;top:532.24px;height:18px"></div><div style="position:absolute;left:78.0px;top:532.24px"><span class="k">"code"</span><span class="p">:</span><span class="p"> </span><span class="s">"01wyvEHwHdJQuZ7ZN6eslS"</span></div><div class="g" style="left:0.0px;top:550.24px;height:18px"></div><div class="g" style="left:15.6px;top:550.24px;height:18px"></div><div class="g" style="left:31.2px;top:550.24px;height:18px"></div><div class="g" style="left:46.8px;top:550.24px;height:18px"></div><div style="position:absolute;left:62.4px;top:550.24px"><span class="p">}</span></div><div class="g" style="left:0.0px;top:568.24px;height:18px"></div><div class="g" style="left:15.6px;top:568.24px;height:18px"></div><div class="g" style="left:31.2px;top:568.24px;height:18px"></div><div style="position:absolute;left:46.8px;top:568.24px"><span class="p">},</span></div><div class="g" style="left:0.0px;top:586.24px;height:18px"></div><div class="g" style="left:15.6px;top:586.24px;height:18px"></div><div class="g" style="left:31.2px;top:586.24px;height:18px"></div><div style="position:absolute;left:46.8px;top:586.24px"><span class="p">{</span></div><div class="g" style="left:0.0px;top:604.24px;height:18px"></div><div class="g" style="left:15.6px;top:604.24px;height:18px"></div><div class="g" style="left:31.2px;top:604.24px;height:18px"></div><div class="g" style="left:46.8px;top:604.24px;height:18px"></div><div style="position:absolute;left:62.4px;top:604.24px"><span class="k">"startzeit"</span><span class="p">:</span><span class="p"> </span><span class="s">"´01:02:08"</span><span class="p">,</span></div><div class="g" style="left:0.0px;top:622.24px;height:18px"></div><div class="g" style="left:15.6px;top:622.24px;height:18px"></div><div class="g" style="left:31.2px;top:622.24px;height:18px"></div><div class="g" style="left:46.8px;top:622.24px;height:18px"></div><div style="position:absolute;left:62.4px;top:622.24px"><span class="k">"endzeit"</span><span class="p">:</span><span class="p"> </span><span class="s">"01:15:33"</span><span class="p">,</span></div><div class="g" style="left:0.0px;top:640.24px;height:18px"></div><div class="g" style="left:15.6px;top:640.24px;height:18px"></div><div class="g" style="left:31.2px;top:640.24px;height:18px"></div><div class="g" style="left:46.8px;top:640.24px;height:18px"></div><div style="position:absolute;left:62.4px;top:640.24px"><span class="k">"thema"</span><span class="p">:</span><span class="p"> </span><span class="s">"Das kann doch kein Zufall sein…"</span><span class="p">,</span></div><div class="g" style="left:0.0px;top:658.24px;height:18px"></div><div class="g" style="left:15.6px;top:658.24px;height:18px"></div><div class="g" style="left:31.2px;top:658.24px;height:18px"></div><div class="g" style="left:46.8px;top:658.24px;height:18px"></div><div style="position:absolute;left:62.4px;top:658.24px"><span class="k">"beschreibung"</span><span class="p">:</span><span class="p"> </span><span class="s">"Etwas wird als kein Zufall betitelt,</span></div><div style="position:absolute;left:0;top:676.24px"><span class="s">da Menschen in Informationen Muster erkennen. Noch dazu erkennt</span></div><div style="position:absolute;left:0;top:694.24px"><span class="s">man eher eine Bestätigung, als ein Widerspruch und wertet dies</span></div><div style="position:absolute;left:0;top:712.24px"><span class="s">stärker. Wenn etwas im Einzelfall unwahrscheinlich ist, ist es</span></div><div style="position:absolute;left:0;top:730.24px"><span class="s">aufs Allgemeine sehr wahrscheinlich."</span><span class="p">,</span></div><div class="g" style="left:0.0px;top:748.24px;height:18px"></div><div class="g" style="left:15.6px;top:748.24px;height:18px"></div><div class="g" style="left:31.2px;top:748.24px;height:18px"></div><div class="g" style="left:46.8px;top:748.24px;height:18px"></div><div style="position:absolute;left:62.4px;top:748.24px"><span class="k">"folge"</span><span class="p">:</span><span class="p"> {</span></div><div class="g" style="left:0.0px;top:766.24px;height:18px"></div><div class="g" style="left:15.6px;top:766.24px;height:18px"></div><div class="g" style="left:31.2px;top:766.24px;height:18px"></div><div class="g" style="left:46.8px;top:766.24px;height:18px"></div><div class="g" style="left:62.4px;top:766.24px;height:18px"></div><div style="position:absolute;left:78.0px;top:766.24px"><span class="k">"folgenId"</span><span class="p">:</span><span class="p"> </span><span class="s">"38"</span><span class="p">,</span></div><div class="g" style="left:0.0px;top:784.24px;height:18px"></div><div class="g" style="left:15.6px;top:784.24px;height:18px"></div><div class="g" style="left:31.2px;top:784.24px;height:18px"></div><div class="g" style="left:46.8px;top:784.24px;height:18px"></div><div class="g" style="left:62.4px;top:784.24px;height:18px"></div><div style="position:absolute;left:78.0px;top:784.24px"><span class="k">"folgenname"</span><span class="p">:</span><span class="p"> </span><span class="s">"Sie gab mir Starthilfe beim Kotzen -</span></div><div style="position:absolute;left:0;top:802.24px"><span class="s">bäh."</span><span class="p">,</span></div><div class="g" style="left:0.0px;top:820.24px;height:18px"></div><div class="g" style="left:15.6px;top:820.24px;height:18px"></div><div class="g" style="left:31.2px;top:820.24px;height:18px"></div><div class="g" style="left:46.8px;top:820.24px;height:18px"></div><div class="g" style="left:62.4px;top:820.24px;height:18px"></div><div style="position:absolute;left:78.0px;top:820.24px"><span class="k">"code"</span><span class="p">:</span><span class="p"> </span><span class="s">"6dgBVM5UT9IXkUPQhPROMw"</span></div><div class="g" style="left:0.0px;top:838.24px;height:18px"></div><div class="g" style="left:15.6px;top:838.24px;height:18px"></div><div class="g" style="left:31.2px;top:838.24px;height:18px"></div><div class="g" style="left:46.8px;top:838.24px;height:18px"></div><div style="position:absolute;left:62.4px;top:838.24px"><span class="p">}</span></div><div class="g" style="left:0.0px;top:856.24px;height:18px"></div><div class="g" style="left:15.6px;top:856.24px;height:18px"></div><div class="g" style="left:31.2px;top:856.24px;height:18px"></div><div style="position:absolute;left:46.8px;top:856.24px"><span class="p">},</span></div><div class="g" style="left:0.0px;top:874.24px;height:18px"></div><div class="g" style="left:15.6px;top:874.24px;height:18px"></div><div class="g" style="left:31.2px;top:874.24px;height:18px"></div><div style="position:absolute;left:46.8px;top:874.24px"><span class="p">{</span></div><div class="g" style="left:0.0px;top:892.24px;height:18px"></div><div class="g" style="left:15.6px;top:892.24px;height:18px"></div><div class="g" style="left:31.2px;top:892.24px;height:18px"></div><div class="g" style="left:46.8px;top:892.24px;height:18px"></div><div style="position:absolute;left:62.4px;top:892.24px"><span class="k">"startzeit"</span><span class="p">:</span><span class="p"> </span><span class="s">"00:45:48"</span><span class="p">,</span></div><div class="g" style="left:0.0px;top:910.24px;height:18px"></div><div class="g" style="left:15.6px;top:910.24px;height:18px"></div><div class="g" style="left:31.2px;top:910.24px;height:18px"></div><div class="g" style="left:46.8px;top:910.24px;height:18px"></div><div style="position:absolute;left:62.4px;top:910.24px"><span class="k">"endzeit"</span><span class="p">:</span><span class="p"> </span><span class="s">"01:10:21"</span><span class="p">,</span></div><div class="g" style="left:0.0px;top:928.24px;height:18px"></div><div class="g" style="left:15.6px;top:928.24px;height:18px"></div><div class="g" style="left:31.2px;top:928.24px;height:18px"></div><div class="g" style="left:46.8px;top:928.24px;height:18px"></div><div style="position:absolute;left:62.4px;top:928.24px"><span class="k">"thema"</span><span class="p">:</span><span class="p"> </span><span class="s">"Geschichte der Lichtgeschwindigkeit"</span><span class="p">,</span></div><div class="g" style="left:0.0px;top:946.24px;height:18px"></div><div class="g" style="left:15.6px;top:946.24px;height:18px"></div><div class="g" style="left:31.2px;top:946.24px;height:18px"></div><div class="g" style="left:46.8px;top:946.24px;height:18px"></div><div style="position:absolute;left:62.4px;top:946.24px"><span class="k">"beschreibung"</span><span class="p">:</span><span class="p"> </span><span class="s">"Hippolyte Fizeau hat mit einem Zahnrad</span></div><div style="position:absolute;left:0;top:964.24px"><span class="s">und einem Spiegel die Lichtgeschwindigkeit sehr nahe bestimmt.</span></div><div style="position:absolute;left:0;top:982.24px"><span class="s">Sie ist außerdem konstant."</span><span class="p">,</span></div><div class="g" style="left:0.0px;top:1000.24px;height:18px"></div><div class="g" style="left:15.6px;top:1000.24px;height:18px"></div><div class="g" style="left:31.2px;top:1000.24px;height:18px"></div><div class="g" style="left:46.8px;top:1000.24px;height:18px"></div><div style="position:absolute;left:62.4px;top:1000.24px"><span class="k">"folge"</span><span class="p">:</span><span class="p"> {</span></div><div class="g" style="left:0.0px;top:1018.24px;height:18px"></div><div class="g" style="left:15.6px;top:1018.24px;height:18px"></div><div class="g" style="left:31.2px;top:1018.24px;height:18px"></div><div class="g" style="left:46.8px;top:1018.24px;height:18px"></div><div class="g" style="left:62.4px;top:1018.24px;height:18px"></div><div style="position:absolute;left:78.0px;top:1018.24px"><span class="k">"folgenId"</span><span class="p">:</span><span class="p"> </span><span class="s">"39"</span><span class="p">,</span></div><div class="g" style="left:0.0px;top:1036.24px;height:18px"></div><div class="g" style="left:15.6px;top:1036.24px;height:18px"></div><div class="g" style="left:31.2px;top:1036.24px;height:18px"></div><div class="g" style="left:46.8px;top:1036.24px;height:18px"></div><div class="g" style="left:62.4px;top:1036.24px;height:18px"></div><div style="position:absolute;left:78.0px;top:1036.24px"><span class="k">"folgenname"</span><span class="p">:</span><span class="p"> </span><span class="s">"Wir alle haben kleine NeoN4z!s im</span></div><div style="position:absolute;left:0;top:1054.24px"><span class="s">Blut"</span><span class="p">,</span></div><div class="g" style="left:0.0px;top:1072.24px;height:18px"></div><div class="g" style="left:15.6px;top:1072.24px;height:18px"></div><div class="g" style="left:31.2px;top:1072.24px;height:18px"></div><div class="g" style="left:46.8px;top:1072.24px;height:18px"></div><div class="g" style="left:62.4px;top:1072.24px;height:18px"></div><div style="position:absolute;left:78.0px;top:1072.24px"><span class="k">"code"</span><span class="p">:</span><span class="p"> </span><span class="s">"7rezMhxcZpDp8YGvaOI3Vq"</span></div><div class="g" style="left:0.0px;top:1090.24px;height:18px"></div><div class="g" style="left:15.6px;top:1090.24px;height:18px"></div><div class="g" style="left:31.2px;top:1090.24px;height:18px"></div><div class="g" style="left:46.8px;top:1090.24px;height:18px"></div><div style="position:absolute;left:62.4px;top:1090.24px"><span class="p">}</span></div></div>
</body></html>
